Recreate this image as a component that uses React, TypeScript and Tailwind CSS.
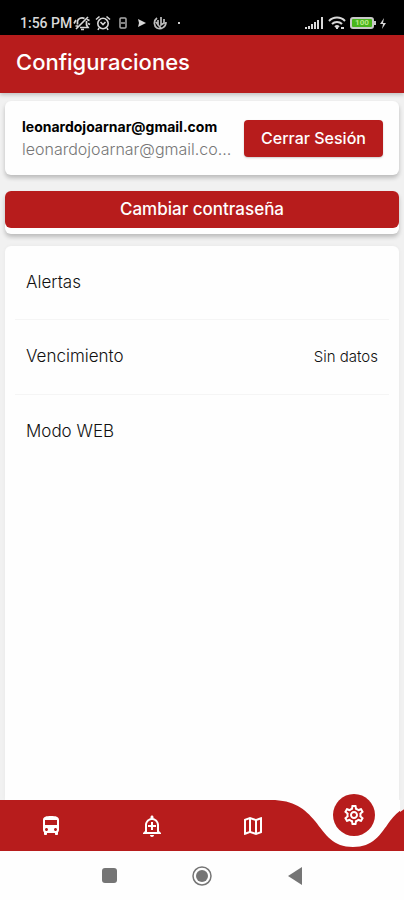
import React from 'react';
import { MdDirectionsBus, MdOutlineAddAlert, MdOutlineMap, MdOutlineSettings } from 'react-icons/md';

function StatusBar() {
  return (
    <div className="flex h-[35px] shrink-0 items-end justify-between bg-black pr-[18px] pb-1 pl-5 text-[#d8d8d8]">
      <div className="flex h-4 items-center">
        <span className="w-[53px] whitespace-nowrap font-[Roboto,sans-serif] text-sm leading-4 font-medium">1:56 PM</span>
        <svg width="18" height="16" viewBox="0 0 18 16" fill="none" stroke="currentColor" strokeWidth="1.7" aria-hidden="true">
          <path d="M4.500 9.500V6.500a4.500 4 0 0 1 7-3M13.500 6v4l1.500 2.500H7M8 14.500h3M3 14 15 2M1 8.500 3 5M2.500 11H5M14 4.500l2.500 1M15 8.500l2 1" />
        </svg>
        <svg className="ml-1" width="16" height="16" viewBox="0 0 16 16" fill="none" stroke="currentColor" strokeWidth="1.6" aria-hidden="true">
          <circle cx="8" cy="8.500" r="5.200" />
          <path d="M1 4.500 4.500 1.500M11.500 1.500 15 4.500M5.500 7 8 9.500 10.500 7M4 13l-1 2M12 13l1 2" />
        </svg>
        <svg className="ml-[7px]" width="10" height="14" viewBox="0 0 10 14" fill="none" stroke="#aaaaaa" strokeWidth="1.5" aria-hidden="true">
          <path d="M2 6V3a1 1 0 0 1 1-1h4a1 1 0 0 1 1 1v3M1 7h8M2 8v3a1 1 0 0 0 1 1h4a1 1 0 0 0 1-1V8" />
        </svg>
        <svg className="ml-[10px]" width="8" height="8" viewBox="0 0 8 8" fill="currentColor" aria-hidden="true">
          <path d="M0 0l8 4-8 4 1-4z" />
        </svg>
        <svg className="ml-[7px]" width="14" height="14" viewBox="0 0 14 14" fill="none" stroke="#bdbdbd" strokeWidth="1.7" aria-hidden="true">
          <path d="M4 2C0 5 1 10 4 12c4 2 9-1 9-6M5 4v5l3 3M8 1v8l3-2V3M3 6l3 4" />
        </svg>
        <span className="ml-[11px] size-[2px] bg-[#cccccc]" />
      </div>
      <div className="flex h-4 items-center">
        <svg width="19" height="12" viewBox="0 0 19 12" fill="currentColor" aria-hidden="true">
          <path d="M0 10h2v2H0zM3 9h2v3H3zM6 7h2v5H6zM9 5h2v7H9zM12 3h2v9h-2zM16 0h2v12h-2z" />
        </svg>
        <svg className="ml-1" width="18" height="14" viewBox="0 0 18 14" fill="none" stroke="currentColor" strokeWidth="2" aria-hidden="true">
          <path d="M1 5a11 11 0 0 1 16 0M4 8a7 7 0 0 1 10 0M7 11a3 3 0 0 1 4 0M9 10v3" />
          <path d="M13 12h3" />
        </svg>
        <span className="ml-1 flex h-3 w-6 items-center justify-center rounded-[3px] border-2 border-[#c8c8c8] bg-[#48b51c] font-[Roboto,sans-serif] text-[8px] leading-none font-bold text-[#b9e889]">100</span>
        <span className="h-1 w-[2px] bg-[#c8c8c8]" />
        <svg className="ml-1" width="6" height="11" viewBox="0 0 6 11" fill="currentColor" aria-hidden="true">
          <path d="M4 0 0 6h3L2 11l4-6H3z" />
        </svg>
      </div>
    </div>
  );
}

const tabs = [
  { label: 'Buses', Icon: MdDirectionsBus },
  { label: 'Nueva alerta', Icon: MdOutlineAddAlert },
  { label: 'Mapa', Icon: MdOutlineMap },
];

function TabBar() {
  return (
    <nav className="relative grid h-[51px] shrink-0 grid-cols-4 bg-[#b71c1c] text-white">
      {tabs.map(({ label, Icon }) => (
        <button key={label} type="button" aria-label={label} className="flex items-center justify-center">
          <Icon size={24} aria-hidden="true" />
        </button>
      ))}
      <div className="relative h-[51px]">
        <div className="absolute inset-y-0 right-0 -left-8 overflow-hidden">
          <svg width="164" height="51" viewBox="0 0 164 51" aria-hidden="true">
            <path d="M0 0C23 0 34 9 44 21C55 35 62 47 82 47C102 47 109 35 119 21C129 8 143 0 164 0Z" fill="#fefefe" />
            <path d="M129 0h6v8l-6 4Z" fill="#f1f1f1" />
          </svg>
        </div>
        <div className="absolute inset-x-0 -top-[6px] flex justify-center">
          <button type="button" aria-label="Configuraciones" aria-current="page" className="flex size-[42px] items-center justify-center rounded-full bg-[#b71c1c]">
            <MdOutlineSettings size={24} aria-hidden="true" />
          </button>
        </div>
      </div>
    </nav>
  );
}

function SystemNav() {
  return (
    <div className="flex h-[49px] shrink-0 items-center justify-center gap-[73px] bg-[#fefefe] text-[#757575]">
      <button type="button" aria-label="Recientes" className="flex size-5 items-center justify-center">
        <span className="size-[15px] rounded-[3px] bg-[#757575]" />
      </button>
      <button type="button" aria-label="Inicio" className="flex size-5 items-center justify-center">
        <svg width="20" height="20" viewBox="0 0 20 20" aria-hidden="true">
          <circle cx="10" cy="10" r="9" fill="none" stroke="currentColor" strokeWidth="1.5" />
          <circle cx="10" cy="10" r="6" fill="currentColor" />
        </svg>
      </button>
      <button type="button" aria-label="Atrás" className="flex size-5 items-center justify-center">
        <svg width="14" height="18" viewBox="0 0 14 18" fill="currentColor" aria-hidden="true">
          <path d="M14 0v18L0 9z" />
        </svg>
      </button>
    </div>
  );
}

export default function App() {
  return (
    <div className="flex min-h-screen flex-col bg-[#f1f1f1] font-[Inter,sans-serif] text-[#262626]">
      <StatusBar />
      <header className="relative flex h-[58px] shrink-0 items-center bg-[#b71c1c] px-4 pb-1 shadow-[0_2px_4px_rgba(0,0,0,0.2)]">
        <h1 className="text-[22px] leading-8 font-medium text-white">Configuraciones</h1>
      </header>
      <main className="flex flex-1 flex-col px-[5px] pt-2">
        <section className="flex h-[74px] items-center justify-between gap-3 rounded-md bg-[#fefefe] pr-4 pl-[17px] shadow-[0_3px_4px_rgba(0,0,0,0.22)]">
          <div className="min-w-0">
            <p className="text-sm leading-[22px] font-bold whitespace-nowrap text-black">leonardojoarnar@gmail.com</p>
            <p className="text-base leading-[22px] font-light whitespace-nowrap text-[#777777]">leonardojoarnar@gmail.co…</p>
          </div>
          <button type="button" className="h-[37px] w-[139px] shrink-0 rounded bg-[#b71c1c] text-base font-medium text-white shadow-[0_1px_2px_rgba(0,0,0,0.2)]">Cerrar Sesión</button>
        </section>
        <section className="mt-4 rounded-md bg-[#fefefe] pb-[6px] shadow-[0_3px_4px_rgba(0,0,0,0.22)]">
          <button type="button" className="block h-[37px] w-full rounded-md bg-[#b71c1c] text-[17px] font-medium text-white">Cambiar contraseña</button>
        </section>
        <section className="mt-3 flex-1 rounded-t-md bg-[#fefefe] px-[10px] shadow-[0_0_4px_rgba(0,0,0,0.04)]">
          <ul className="divide-y divide-[#f5f5f5] font-light text-[#111111]">
            <li className="flex h-[74px] items-center px-[11px] text-[17px]">Alertas</li>
            <li className="flex h-[75px] items-center justify-between px-[11px] text-[17px]">
              <span>Vencimiento</span>
              <span className="text-[15px]">Sin datos</span>
            </li>
            <li className="flex h-[74px] items-center px-[11px] text-[17px]">Modo WEB</li>
          </ul>
        </section>
      </main>
      <TabBar />
      <SystemNav />
    </div>
  );
}
